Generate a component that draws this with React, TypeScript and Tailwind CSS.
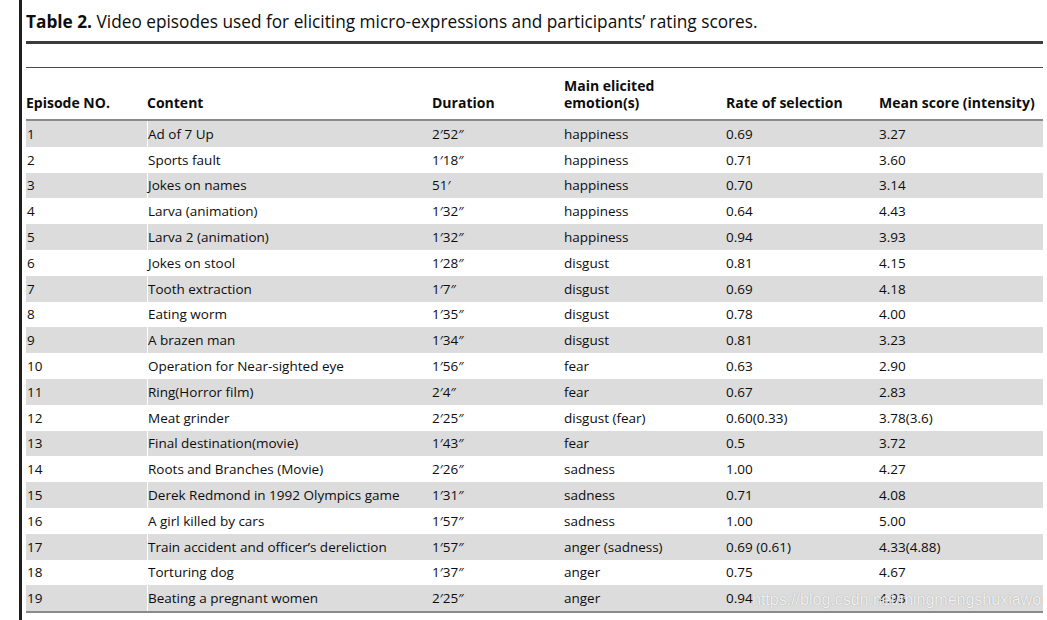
const rows = [
  ["1", "Ad of 7 Up", "2′52″", "happiness", "0.69", "3.27"],
  ["2", "Sports fault", "1′18″", "happiness", "0.71", "3.60"],
  ["3", "Jokes on names", "51′", "happiness", "0.70", "3.14"],
  ["4", "Larva (animation)", "1′32″", "happiness", "0.64", "4.43"],
  ["5", "Larva 2 (animation)", "1′32″", "happiness", "0.94", "3.93"],
  ["6", "Jokes on stool", "1′28″", "disgust", "0.81", "4.15"],
  ["7", "Tooth extraction", "1′7″", "disgust", "0.69", "4.18"],
  ["8", "Eating worm", "1′35″", "disgust", "0.78", "4.00"],
  ["9", "A brazen man", "1′34″", "disgust", "0.81", "3.23"],
  ["10", "Operation for Near-sighted eye", "1′56″", "fear", "0.63", "2.90"],
  ["11", "Ring(Horror film)", "2′4″", "fear", "0.67", "2.83"],
  ["12", "Meat grinder", "2′25″", "disgust (fear)", "0.60(0.33)", "3.78(3.6)"],
  ["13", "Final destination(movie)", "1′43″", "fear", "0.5", "3.72"],
  ["14", "Roots and Branches (Movie)", "2′26″", "sadness", "1.00", "4.27"],
  ["15", "Derek Redmond in 1992 Olympics game", "1′31″", "sadness", "0.71", "4.08"],
  ["16", "A girl killed by cars", "1′57″", "sadness", "1.00", "5.00"],
  ["17", "Train accident and officer’s dereliction", "1′57″", "anger (sadness)", "0.69 (0.61)", "4.33(4.88)"],
  ["18", "Torturing dog", "1′37″", "anger", "0.75", "4.67"],
  ["19", "Beating a pregnant women", "2′25″", "anger", "0.94", "4.93"],
];

// column widths add up to 1017px (x 26 → 1043)
const cols = "grid grid-cols-[121px_285px_132px_162px_153px_164px]";

export default function App() {
  return (
    <div className="w-[1047px] h-[620px] bg-white flex overflow-hidden relative text-[#0d0d0d]" style={{ fontFamily: '"Open Sans", sans-serif' }}>
      <div className="ml-[19px] w-[3px] h-full bg-[#1e1e1e]" />
      <div className="ml-[4px] w-[1017px] flex flex-col">
        <div className="pt-[11px] h-[41px] text-[17.25px] leading-[22px] whitespace-nowrap">
          <span className="font-bold">Table 2.</span> Video episodes used for eliciting micro-expressions and participants’ rating scores.
        </div>
        <div className="h-[3px] bg-[#3c3c3c]" />
        <div className="h-[23px]" />
        <div className="h-px bg-[#4a4a4a]" />
        <div className={`${cols} h-[51px] items-end pb-[8px] text-[14px] leading-[17px] font-bold`}>
          <div>Episode NO.</div>
          <div>Content</div>
          <div>Duration</div>
          <div>
            Main elicited
            <br />
            emotion(s)
          </div>
          <div>Rate of selection</div>
          <div>Mean score (intensity)</div>
        </div>
        <div className="h-[2px] bg-[#8a8a8a]" />
        {rows.map((r, i) => (
          <div key={r[0]} className={`${cols} h-[25.8px] items-center text-[13.5px] ${i % 2 === 0 ? "bg-[#dcdcdc]" : "bg-white"}`}>
            <div className="pl-px">{r[0]}</div>
            <div className="border-l border-white h-full flex items-center">{r[1]}</div>
            <div>{r[2]}</div>
            <div>{r[3]}</div>
            <div>{r[4]}</div>
            <div>{r[5]}</div>
          </div>
        ))}
        <div className="h-[2px] bg-[#8a8a8a]" />
      </div>
      <div
        className="absolute left-[752px] top-[590px] text-[16px] leading-[20px] text-white/85 whitespace-nowrap"
        style={{ fontFamily: '"Liberation Sans", Arial, sans-serif', textShadow: "0 0 1px rgba(0,0,0,0.35)" }}
      >
        https://blog.csdn.net/mingmengshuxiawo
      </div>
    </div>
  );
}
